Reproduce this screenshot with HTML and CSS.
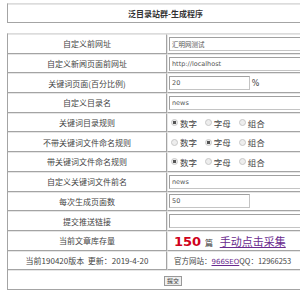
FILE: index.html
```html
<!DOCTYPE html>
<html lang="zh-CN">
<head>
  <meta charset="UTF-8">
  <title>泛目录站群-生成程序</title>
  <link rel="stylesheet" href="styles.css">
</head>
<body>
<div class="page">

<table class="head">
  <tr><td>泛目录站群-生成程序</td></tr>
</table>

<form class="panel">
<table class="main">
  <tr>
    <td class="lbl">自定义前网址</td>
    <td class="val"><input class="txt wide" type="text" value="汇明网测试"></td>
  </tr>
  <tr>
    <td class="lbl">自定义新闻页面前网址</td>
    <td class="val"><input class="txt wide" type="text" value="http://localhost"></td>
  </tr>
  <tr>
    <td class="lbl">关键词页面(百分比例)</td>
    <td class="val"><input class="txt short" type="text" value="20"> <span class="pct">%</span></td>
  </tr>
  <tr>
    <td class="lbl">自定义目录名</td>
    <td class="val"><input class="txt wide" type="text" value="news"></td>
  </tr>
  <tr>
    <td class="lbl">关键词目录规则</td>
    <td class="val">
      <label class="opt"><input type="radio" name="r1" checked>数字</label>
      <label class="opt"><input type="radio" name="r1">字母</label>
      <label class="opt"><input type="radio" name="r1">组合</label>
    </td>
  </tr>
  <tr>
    <td class="lbl">不带关键词文件命名规则</td>
    <td class="val">
      <label class="opt"><input type="radio" name="r2">数字</label>
      <label class="opt"><input type="radio" name="r2" checked>字母</label>
      <label class="opt"><input type="radio" name="r2">组合</label>
    </td>
  </tr>
  <tr>
    <td class="lbl">带关键词文件命名规则</td>
    <td class="val">
      <label class="opt"><input type="radio" name="r3" checked>数字</label>
      <label class="opt"><input type="radio" name="r3">字母</label>
      <label class="opt"><input type="radio" name="r3">组合</label>
    </td>
  </tr>
  <tr>
    <td class="lbl">自定义关键词文件前名</td>
    <td class="val"><input class="txt wide" type="text" value="news"></td>
  </tr>
  <tr>
    <td class="lbl">每次生成页面数</td>
    <td class="val"><input class="txt short" type="text" value="50"></td>
  </tr>
  <tr>
    <td class="lbl">提交推送链接</td>
    <td class="val"><input class="txt wide" type="text" value=""></td>
  </tr>
  <tr>
    <td class="lbl">当前文章库存量</td>
    <td class="val"><span class="count">150</span> <span class="unit">篇</span> <a class="collect" href="#">手动点击采集</a></td>
  </tr>
  <tr>
    <td class="lbl">当前190420版本&nbsp; 更新：2019-4-20</td>
    <td class="val info">官方网站：<a href="#">966SEO</a>QQ：12966253</td>
  </tr>
  <tr>
    <td class="foot" colspan="2"><button type="button" class="btn">提交</button></td>
  </tr>
</table>
</form>

</div>
</body>
</html>
```

FILE: styles.css
```css
body {
  margin: 0;
  padding: 3px 0 0 7px;
  font-family: "Noto Sans CJK SC", "DejaVu Sans", sans-serif;
  font-size: 8px;
  color: #444;
  background: #fff;
}
.page {
  width: 293px;
  overflow: hidden;
}
table {
  width: 316px;
  border-collapse: separate;
  border-spacing: 0;
  border-left: 1px solid #a4a4a4;
  border-top: 1px solid #dcdcdc;
}
td {
  border-top: 1px solid #e6e6e6;
  border-bottom: 1px solid #a4a4a4;
  padding: 0 1px;
}
.head td {
  height: 17px;
  text-align: center;
  font-weight: bold;
  font-size: 8px;
  color: #333;
}
.panel {
  margin-top: 10px;
}
.main td {
  height: 17.7px;
}
.lbl {
  width: 156px;
  text-align: center;
  border-right: 1px solid #a4a4a4;
}
.val {
  border-left: 1px solid #e6e6e6;
}
.txt {
  box-sizing: border-box;
  height: 14px;
  padding: 0 2px;
  margin: 0;
  font-family: "DejaVu Sans", "Noto Sans CJK SC", sans-serif;
  font-size: 6.5px;
  color: #555;
  border: 1px solid #c4c4c4;
  border-top-color: #a0a0a0;
  border-left-color: #a0a0a0;
  vertical-align: middle;
}
.wide {
  width: 150px;
}
.short {
  width: 81px;
}
.pct {
  font-family: "DejaVu Sans", sans-serif;
  font-size: 8px;
  vertical-align: middle;
}
.opt {
  display: inline-flex;
  align-items: center;
  gap: 2px;
  margin: 0 4px 0 2px;
  font-size: 8.5px;
}
.opt input {
  appearance: none;
  width: 7px;
  height: 7px;
  margin: 0;
  border: 1px solid #c8c8c8;
  border-radius: 50%;
  background: #ededed;
}
.opt input:checked {
  background: radial-gradient(circle, #555 0 1.6px, #ededed 2px);
}
.count {
  margin-left: 5px;
  font-family: "DejaVu Sans", sans-serif;
  font-size: 13px;
  font-weight: bold;
  color: #d0021b;
}
.unit {
  margin: 0 5px 0 2px;
  font-size: 8px;
}
.collect {
  font-size: 11px;
  color: #6a2a8e;
}
.info {
  padding-left: 6px;
  font-size: 7.5px;
}
.info a {
  color: #6a2a8e;
  font-family: "DejaVu Sans", sans-serif;
  font-size: 7px;
}
.foot {
  text-align: center;
}
.btn {
  height: 10px;
  padding: 0 2px;
  font-size: 6px;
  line-height: 8px;
  color: #333;
  background: #efefef;
  border: 1px solid #999;
  border-radius: 0;
  margin-left: 14px;
}
```
